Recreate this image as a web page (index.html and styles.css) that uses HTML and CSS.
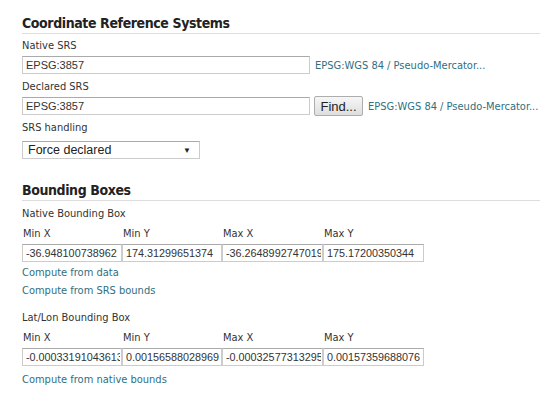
FILE: index.html
```html
<!DOCTYPE html>
<html lang="en">
<head>
    <meta charset="UTF-8">
    <title>Coordinate Reference Systems</title>
    <link rel="stylesheet" href="styles.css">
</head>
<body>
    <div class="page">
        <!-- Coordinate reference systems -->
        <h2>Coordinate Reference Systems</h2>

        <div class="field">
            <label>Native SRS</label>
            <div class="row">
                <input class="srs-input" type="text" value="EPSG:3857">
                <a class="link" href="#">EPSG:WGS 84 / Pseudo-Mercator...</a>
            </div>
        </div>

        <div class="field">
            <label>Declared SRS</label>
            <div class="row">
                <input class="srs-input" type="text" value="EPSG:3857">
                <button class="find">Find...</button>
                <a class="link" href="#">EPSG:WGS 84 / Pseudo-Mercator...</a>
            </div>
        </div>

        <div class="field">
            <label>SRS handling</label>
            <div class="select">
                <span>Force declared</span>
                <span class="arrow">&#9660;</span>
            </div>
        </div>

        <!-- Bounding boxes -->
        <h2 class="second">Bounding Boxes</h2>

        <div class="bbox">
            <label>Native Bounding Box</label>
            <div class="grid">
                <span class="col-label">Min X</span>
                <span class="col-label">Min Y</span>
                <span class="col-label">Max X</span>
                <span class="col-label">Max Y</span>
                <input type="text" value="-36.948100738962">
                <input type="text" value="174.31299651374">
                <input type="text" value="-36.264899274701963">
                <input type="text" value="175.17200350344">
            </div>
            <a class="compute" href="#">Compute from data</a>
            <a class="compute" href="#">Compute from SRS bounds</a>
        </div>

        <div class="bbox latlon">
            <label>Lat/Lon Bounding Box</label>
            <div class="grid">
                <span class="col-label">Min X</span>
                <span class="col-label">Min Y</span>
                <span class="col-label">Max X</span>
                <span class="col-label">Max Y</span>
                <input type="text" value="-0.000331910436131">
                <input type="text" value="0.00156588028969">
                <input type="text" value="-0.000325773132959">
                <input type="text" value="0.00157359688076">
            </div>
            <a class="compute" href="#">Compute from native bounds</a>
        </div>
    </div>
</body>
</html>
```

FILE: styles.css
```css
body {
    margin: 0;
    padding: 0;
    background-color: #fff;
    font-family: "DejaVu Sans", Verdana, sans-serif;
    font-stretch: condensed;
    color: #333;
}
.page {
    padding-left: 22px;
}
h2 {
    margin: 0;
    padding-top: 13px;
    font-size: 14px;
    line-height: 20px;
    letter-spacing: -0.4px;
    font-weight: bold;
    color: #222;
    border-bottom: 1px solid #ddd;
}
h2.second {
    margin-top: 8px;
}
label {
    display: block;
    font-size: 11px;
    line-height: 14px;
}
.field {
    margin-top: 5px;
}
.field label {
    margin-bottom: 2px;
}
.row {
    display: flex;
    align-items: center;
    height: 20px;
}
input {
    box-sizing: border-box;
    height: 18px;
    margin: 0;
    padding: 0 1px 0 3px;
    border: 1px solid #ccc;
    border-top-color: #aaa;
    font-family: "Liberation Sans", Arial, sans-serif;
    font-size: 10.8px;
    color: #333;
    background: #fff;
}
.srs-input {
    width: 288px;
    font-size: 11px;
}
.link, .compute {
    font-size: 11px;
    color: #2f6f7f;
    text-decoration: none;
}
.row .link {
    margin-left: 5px;
}
.find {
    box-sizing: border-box;
    height: 20px;
    width: 49px;
    margin-left: 4px;
    padding: 0;
    border: 1px solid #adadad;
    border-radius: 2px;
    background: linear-gradient(#f6f6f6, #dedede);
    font-family: "Liberation Sans", Arial, sans-serif;
    font-size: 13px;
    color: #222;
}
.select {
    box-sizing: border-box;
    width: 178px;
    height: 18px;
    margin-top: 6px;
    padding: 0 8px 0 5px;
    display: flex;
    align-items: center;
    justify-content: space-between;
    border: 1px solid #ccc;
    border-top-color: #aaa;
    font-family: "Liberation Sans", Arial, sans-serif;
    font-size: 12.5px;
    color: #222;
}
.select .arrow {
    font-size: 8px;
}
.bbox {
    margin-top: 6px;
}
.latlon {
    margin-top: 11px;
}
.grid {
    display: grid;
    grid-template-columns: 100px 100px 101px 101px;
    margin-top: 6px;
}
.col-label {
    font-size: 11px;
    line-height: 14px;
    padding-left: 1px;
    margin-bottom: 3px;
}
.grid input {
    width: 100%;
}
.compute {
    display: block;
    line-height: 18px;
}
.bbox .grid + .compute {
    margin-top: 2px;
}
.latlon .grid + .compute {
    margin-top: 5px;
}
```
